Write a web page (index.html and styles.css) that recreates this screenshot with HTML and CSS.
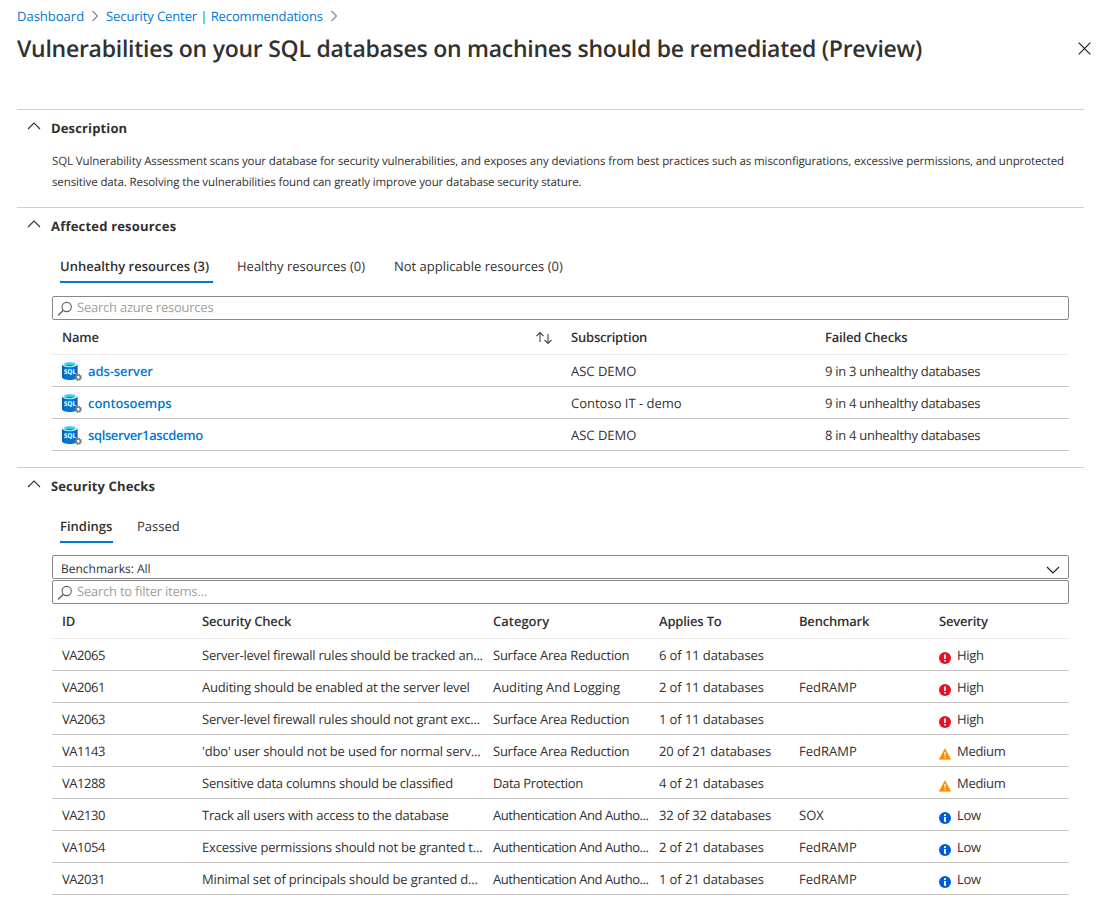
FILE: index.html
```html
<!DOCTYPE html>
<html lang="en">
<head>
<meta charset="utf-8">
<title>Vulnerabilities on your SQL databases</title>
<link rel="stylesheet" href="styles.css">
</head>
<body>
<svg class="defs" width="0" height="0" aria-hidden="true">
  <defs>
    <linearGradient id="cyl"><stop offset="0" stop-color="#005ba1"/><stop offset=".2" stop-color="#0078d4"/><stop offset=".8" stop-color="#0078d4"/><stop offset="1" stop-color="#005ba1"/></linearGradient>
    <symbol id="up" viewBox="0 0 14 8"><path d="M1 7 7 1l6 6" fill="none" stroke="#323130" stroke-width="1.1"/></symbol>
    <symbol id="right" viewBox="0 0 8 12"><path d="M1.5 1 6.5 6l-5 5" fill="none" stroke="#8a8886" stroke-width="1.1"/></symbol>
    <symbol id="lens" viewBox="0 0 16 16"><circle cx="9.7" cy="6" r="4.6" fill="none" stroke="#605e5c" stroke-width="1.1"/><path d="M6.3 9.2 1 14.5" stroke="#605e5c" stroke-width="1.3"/></symbol>
    <symbol id="sort" viewBox="0 0 18 14"><path d="M5 11V1.500M1.500 5l3.500-3.500L8.500 5M13 3v9.500M9.500 9l3.500 3.500L16.500 9" fill="none" stroke="#484644" stroke-width="1.100"/></symbol>
    <symbol id="db" viewBox="0 0 20 20">
      <path d="M0 3v13c0 1.700 3.400 3 7.800 3s7.800-1.300 7.800-3V3z" fill="url(#cyl)"/>
      <ellipse cx="7.800" cy="3.200" rx="7.800" ry="3" fill="#e8f4fa"/>
      <ellipse cx="7.800" cy="3.300" rx="6" ry="2" fill="#32d4f5"/>
      <path d="M3.800 4.300c2-.9 6-.9 8 0-2 1.300-6 1.300-8 0" fill="#198ab3"/>
      <text x="7.900" y="13.300" text-anchor="middle" class="db-label">SQL</text>
      <circle cx="16.300" cy="16.300" r="2.100" fill="#fff" stroke="#808080" stroke-width="1.500"/>
      <circle cx="16.300" cy="16.300" r="3.100" fill="none" stroke="#808080" stroke-width="1.200" stroke-dasharray="1.220 1.215"/>
    </symbol>
    <symbol id="high" viewBox="0 0 12 12"><circle cx="6" cy="6" r="6" fill="#e81123"/><path d="M5 2.500h2l-.3 4.500H5.300zM5.200 8h1.600v1.600H5.200z" fill="#fff"/></symbol>
    <symbol id="medium" viewBox="0 0 12 12"><path d="M6 .8 11.700 11.300H.3z" fill="#ff8c00" stroke="#ff8c00" stroke-width=".6" stroke-linejoin="round"/><path d="M5.300 4h1.400l-.2 3.900h-1zM5.300 8.700h1.400V10H5.300z" fill="#fff"/></symbol>
    <symbol id="low" viewBox="0 0 12 12"><circle cx="6" cy="6" r="6" fill="#015cda"/><path d="M5 2.200h2V4H5zM5 5h2v4.800H5z" fill="#fff"/></symbol>
  </defs>
</svg>

<header class="page-head">
  <nav class="crumbs">
    <a>Dashboard</a><svg class="crumb-sep"><use href="#right"/></svg>
    <a class="crumb-long">Security Center | Recommendations</a><svg class="crumb-sep"><use href="#right"/></svg>
  </nav>
  <div class="title-row">
    <h1>Vulnerabilities on your SQL databases on machines should be remediated (Preview)</h1>
    <svg class="close" viewBox="0 0 13 13"><path d="M.7.7l11.600 11.600M12.300.7.7 12.300" stroke="#201f1e" stroke-width="1.200"/></svg>
  </div>
</header>

<main>
  <section class="section section-desc">
    <h2><svg class="chev"><use href="#up"/></svg><span>Description</span></h2>
    <p class="desc">SQL Vulnerability Assessment scans your database for security vulnerabilities, and exposes any deviations from best practices such as misconfigurations, excessive permissions, and unprotected<br>sensitive data. Resolving the vulnerabilities found can greatly improve your database security stature.</p>
  </section>

  <section class="section section-res">
    <h2><svg class="chev"><use href="#up"/></svg><span class="h-res">Affected resources</span></h2>
    <div class="tabs">
      <span class="tab active w153">Unhealthy resources (3)</span>
      <span class="tab w133">Healthy resources (0)</span>
      <span class="tab">Not applicable resources (0)</span>
    </div>
    <div class="search"><svg class="lens"><use href="#lens"/></svg><span>Search azure resources</span></div>
    <div class="table resources">
      <div class="row head"><span class="sortable">Name<svg class="sort"><use href="#sort"/></svg></span><span>Subscription</span><span>Failed Checks</span></div>
      <div class="row"><a class="res"><svg class="db"><use href="#db"/></svg>ads-server</a><span>ASC DEMO</span><span class="failed">9 in 3 unhealthy databases</span></div>
      <div class="row"><a class="res"><svg class="db"><use href="#db"/></svg>contosoemps</a><span>Contoso IT - demo</span><span class="failed">9 in 4 unhealthy databases</span></div>
      <div class="row"><a class="res res-long"><svg class="db"><use href="#db"/></svg>sqlserver1ascdemo</a><span>ASC DEMO</span><span class="failed">8 in 4 unhealthy databases</span></div>
    </div>
  </section>

  <section class="section section-checks">
    <h2><svg class="chev"><use href="#up"/></svg><span>Security Checks</span></h2>
    <div class="tabs">
      <span class="tab active w53">Findings</span>
      <span class="tab">Passed</span>
    </div>
    <div class="select"><span>Benchmarks: All</span><svg class="down" viewBox="0 0 14 8"><path d="M1 1l6 6 6-6" fill="none" stroke="#201f1e" stroke-width="1.200"/></svg></div>
    <div class="search"><svg class="lens"><use href="#lens"/></svg><span>Search to filter items...</span></div>
    <div class="table checks">
      <div class="row head"><span>ID</span><span>Security Check</span><span class="head-cat">Category</span><span>Applies To</span><span>Benchmark</span><span>Severity</span></div>
      <div class="row"><span class="id">VA2065</span><span class="check check-tight">Server-level firewall rules should be tracked an...</span><span class="cat">Surface Area Reduction</span><span class="applies">6 of 11 databases</span><span></span><span class="sev"><svg><use href="#high"/></svg>High</span></div>
      <div class="row"><span class="id">VA2061</span><span class="check">Auditing should be enabled at the server level</span><span class="cat cat-wide">Auditing And Logging</span><span class="applies">2 of 11 databases</span><span>FedRAMP</span><span class="sev"><svg><use href="#high"/></svg>High</span></div>
      <div class="row"><span class="id">VA2063</span><span class="check check-tight">Server-level firewall rules should not grant exc...</span><span class="cat">Surface Area Reduction</span><span class="applies">1 of 11 databases</span><span></span><span class="sev"><svg><use href="#high"/></svg>High</span></div>
      <div class="row"><span class="id">VA1143</span><span class="check check-loose">'dbo' user should not be used for normal serv...</span><span class="cat">Surface Area Reduction</span><span class="applies">20 of 21 databases</span><span>FedRAMP</span><span class="sev"><svg><use href="#medium"/></svg>Medium</span></div>
      <div class="row"><span class="id">VA1288</span><span class="check check-tight">Sensitive data columns should be classified</span><span class="cat cat-data">Data Protection</span><span class="applies">4 of 21 databases</span><span></span><span class="sev"><svg><use href="#medium"/></svg>Medium</span></div>
      <div class="row"><span class="id">VA2130</span><span class="check check-tight">Track all users with access to the database</span><span class="cat cat-auth">Authentication And Autho...</span><span class="applies">32 of 32 databases</span><span>SOX</span><span class="sev"><svg><use href="#low"/></svg>Low</span></div>
      <div class="row"><span class="id">VA1054</span><span class="check">Excessive permissions should not be granted t...</span><span class="cat cat-auth">Authentication And Autho...</span><span class="applies">2 of 21 databases</span><span>FedRAMP</span><span class="sev"><svg><use href="#low"/></svg>Low</span></div>
      <div class="row"><span class="id">VA2031</span><span class="check check-loose">Minimal set of principals should be granted d...</span><span class="cat cat-auth">Authentication And Autho...</span><span class="applies">1 of 21 databases</span><span>FedRAMP</span><span class="sev"><svg><use href="#low"/></svg>Low</span></div>
    </div>
  </section>
</main>
</body>
</html>
```
FILE: styles.css
```css
* { box-sizing: border-box; }
body {
  margin: 0;
  background: #fff;
  color: #323130;
  font: 13px/20px "Open Sans", "Noto Sans", sans-serif;
  text-rendering: geometricPrecision;
  overflow: hidden;
}
span, a, h1, .desc { white-space: nowrap; }
.defs { display: block; position: absolute; }
a { color: #0078d4; }
.page-head { height: 109px; padding: 6px 0 0 17px; }
.crumbs { display: flex; align-items: center; height: 20px; }
.crumb-long { letter-spacing: -.1px; }
.crumb-sep { width: 8px; height: 12px; margin: 0 7px; }
.title-row { display: flex; align-items: center; height: 46px; padding-right: 12px; justify-content: space-between; }
h1 { margin: -2px 0 0; font-size: 23px; line-height: 32px; font-weight: 600; letter-spacing: -.26px; }
.close { width: 13px; height: 13px; margin-top: -1px; }
main { width: 1067px; margin-left: 17px; }
.section { border-top: 1px solid #d2d0ce; padding: 8px 15px 0 35px; }
.section-desc { height: 98px; }
.section-res { height: 260px; }
h2 { display: flex; align-items: center; height: 20px; margin: 0 0 0 -25px; font-size: 13px; font-weight: 700; letter-spacing: .14px; }
.h-res { letter-spacing: .2px; }
.chev { width: 14px; height: 8px; margin: 0 10px 4px 0; }
.desc { margin: 13px 0 0; font-size: 11.5px; line-height: 21px; letter-spacing: -.117px; }
.tabs { display: flex; gap: 24px; height: 27px; margin: 20px 0 13px 8px; }
.section-checks .tabs { margin-bottom: 12px; }
.tab.active { font-weight: 600; border-bottom: 2px solid #0078d4; }
.w153 { width: 153px; }
.w133 { width: 133px; }
.w53 { width: 53px; }
.search, .select { display: flex; align-items: center; height: 24px; margin-bottom: 1px; border: 1px solid #8a8886; border-radius: 2px; }
.search { color: #a19f9d; padding: 0 0 2px 4px; gap: 4px; letter-spacing: -.23px; }
.lens { width: 16px; height: 16px; margin-top: 3px; }
.select { padding: 3px 8px 0; justify-content: space-between; font-size: 12px; }
.down { width: 14px; height: 8px; margin-top: 2px; }
.row { display: grid; height: 32px; align-items: center; padding-left: 10px; border-bottom: 1px solid #c8c6c4; }
.head { height: 34px; padding-bottom: 2px; font-weight: 570; letter-spacing: -.2px; border-color: #edebe9; }
.head-cat { letter-spacing: 0; }
.resources .row { grid-template-columns: 509px 254px 1fr; }
.checks .row { grid-template-columns: 140px 291px 166px 140px 140px 1fr; }
.sortable { display: flex; align-items: center; justify-content: space-between; padding-right: 18px; }
.sort { width: 18px; height: 14px; margin-top: 2px; }
.res { display: flex; align-items: center; gap: 6px; font-weight: 570; letter-spacing: -.08px; }
.res-long { letter-spacing: -.38px; }
.failed { letter-spacing: -.28px; }
.db { width: 20px; height: 20px; }
.db-label { font: 700 6.5px "Open Sans", sans-serif; fill: #fff; letter-spacing: 0; }
.id { letter-spacing: -.45px; }
.check { letter-spacing: -.2px; }
.check-tight { letter-spacing: -.23px; }
.check-loose { letter-spacing: -.16px; }
.cat { letter-spacing: -.24px; }
.cat-wide { letter-spacing: -.07px; }
.cat-data { letter-spacing: -.32px; }
.cat-auth { letter-spacing: -.42px; }
.applies { letter-spacing: -.1px; }
.sev { display: flex; align-items: center; gap: 6px; letter-spacing: -.3px; }
.sev svg { width: 12px; height: 12px; margin-top: 6px; }
```
